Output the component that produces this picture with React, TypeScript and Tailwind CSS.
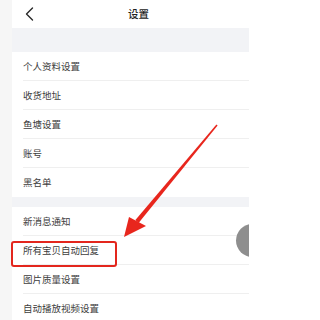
const groupOne = ["个人资料设置", "收货地址", "鱼塘设置", "账号", "黑名单"];
const groupTwo = ["新消息通知", "所有宝贝自动回复", "图片质量设置", "自动播放视频设置"];

function Row({ label, last }: { label: string; last?: boolean }) {
  return (
    <div className="pl-[11px]">
      <div
        className={`flex h-[29px] items-center text-[9.5px] text-[#3d3d3d] ${
          last ? "" : "border-b border-[#efefef]"
        }`}
      >
        {label}
      </div>
    </div>
  );
}

export default function App() {
  return (
    <div className="relative flex h-[320px] w-[249px] overflow-hidden bg-[#f6f6f6] font-['Noto_Sans_CJK_SC',sans-serif]">
      <div className="w-[12px] shrink-0 bg-[#f6f6f6]" />
      <div className="flex flex-1 flex-col bg-white">
        <div className="flex h-[28px] shrink-0 items-center">
          <svg className="ml-[13px] h-[14px] w-[9px]" viewBox="0 0 9 14" fill="none">
            <path d="M7.5 1 L1.5 7 L7.5 13" stroke="#2a2a2a" strokeWidth="1.4" strokeLinecap="round" strokeLinejoin="round" />
          </svg>
          <span className="ml-[94px] text-[10.5px] font-medium text-[#222]">设置</span>
        </div>
        <div className="h-[24px] shrink-0 bg-[#f2f3f6]" />
        {groupOne.map((label, i) => (
          <Row key={label} label={label} last={i === groupOne.length - 1} />
        ))}
        <div className="h-[10px] shrink-0 bg-[#f2f3f6]" />
        {groupTwo.map((label, i) => (
          <Row key={label} label={label} last={i === groupTwo.length - 1} />
        ))}
      </div>

      {/* highlight box */}
      <div className="absolute left-[11px] top-[241px] h-[26px] w-[106px] rounded-[3px] border-2 border-[#e3261d]" />

      {/* arrow */}
      <svg className="absolute left-0 top-0 h-[320px] w-[249px]" viewBox="0 0 249 320">
        <polygon points="217.6,125.5 216.4,124.5 135.4,220 138.6,223" fill="#e8261d" />
        <polygon points="124,237 129,217 146,226" fill="#e8261d" />
      </svg>

      {/* floating button */}
      <div className="absolute left-[236px] top-[224px] h-[33px] w-[33px] rounded-full bg-[#8e8e8e]" />
    </div>
  );
}
